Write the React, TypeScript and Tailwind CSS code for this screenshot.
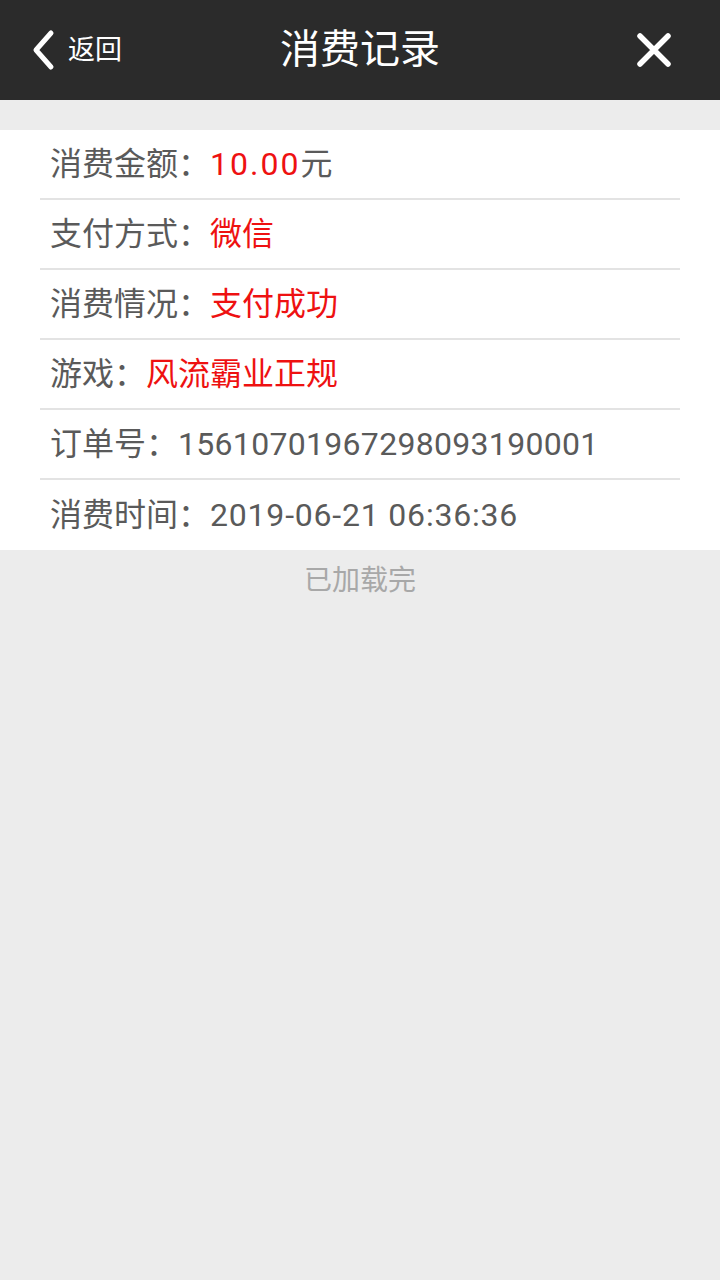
import React from 'react';

type Row = { label: string; value: string; red?: boolean; track?: string };

const rows: Row[] = [
  { label: '消费金额：', value: '10.00', red: true, track: 'tracking-[2px]' },
  { label: '支付方式：', value: '微信', red: true },
  { label: '消费情况：', value: '支付成功', red: true },
  { label: '游戏：', value: '风流霸业正规', red: true },
  { label: '订单号：', value: '15610701967298093190001', track: 'tracking-[0.3px]' },
  { label: '消费时间：', value: '2019-06-21 06:36:36', track: 'tracking-[0.8px]' },
];

const font = { fontFamily: 'Roboto, "Noto Sans CJK SC", sans-serif' };

const App: React.FC = () => {
  return (
    <div className="min-h-[1280px] w-[720px] bg-[#ececec]" style={font}>
      {/* top bar */}
      <div className="relative flex h-[100px] items-center bg-[#2b2b2b] text-white">
        <div className="flex items-center pl-[31px]">
          <svg width="26" height="42" viewBox="0 0 26 42" fill="none">
            <path d="M20 4 L5 21 L20 38" stroke="white" strokeWidth="5" strokeLinecap="round" strokeLinejoin="round" />
          </svg>
          <span className="ml-[11px] text-[27px] leading-none">返回</span>
        </div>
        <div className="pointer-events-none absolute inset-x-0 text-center text-[40px] leading-none">消费记录</div>
        <div className="ml-auto pr-[48px]">
          <svg width="36" height="36" viewBox="0 0 36 36">
            <path d="M4 4 L32 32 M32 4 L4 32" stroke="white" strokeWidth="5.5" strokeLinecap="round" />
          </svg>
        </div>
      </div>

      <div className="mt-[30px] bg-white px-[40px]">
        {rows.map((r, i) => (
          <div
            key={r.label}
            className={
              'flex h-[70px] items-center pl-[10px] text-[32px] leading-none text-[#5a5a5a] ' +
              (i < rows.length - 1 ? 'border-b-2 border-[#e3e3e3]' : '')
            }
          >
            <span>{r.label}</span>
            <span className={(r.red ? 'text-[#ee1111] ' : '') + (r.track || '')}>{r.value}</span>
            {i === 0 && <span>元</span>}
          </div>
        ))}
      </div>

      <div className="pt-[17px] text-center text-[28px] leading-none text-[#a8a8a8]">已加载完</div>
    </div>
  );
};

export default App;
